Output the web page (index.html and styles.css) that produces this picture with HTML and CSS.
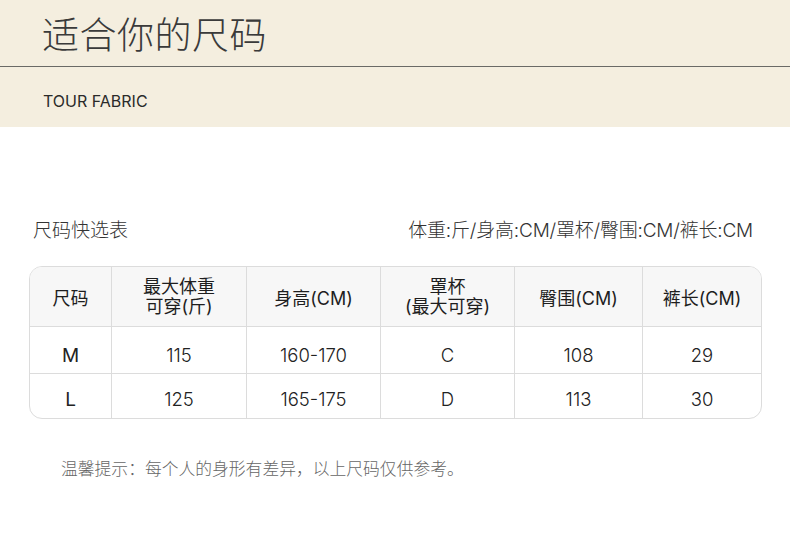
FILE: index.html
```html
<!DOCTYPE html>
<html lang="zh">
<head>
<meta charset="utf-8">
<link rel="stylesheet" href="styles.css">
</head>
<body>
<header class="hero">
  <div class="hero-title"><h1>适合你的尺码</h1></div>
  <div class="hero-sub">TOUR FABRIC</div>
</header>
<main class="content">
  <div class="caption">
    <span class="caption-left">尺码快选表</span>
    <span class="caption-right">体重:斤/身高:CM/罩杯/臀围:CM/裤长:CM</span>
  </div>
  <div class="table">
    <div class="row head">
      <div class="cell c1">尺码</div>
      <div class="cell c2 two">最大体重<br>可穿(斤)</div>
      <div class="cell c3">身高(CM)</div>
      <div class="cell c4 two">罩杯<br>(最大可穿)</div>
      <div class="cell c5">臀围(CM)</div>
      <div class="cell c6">裤长(CM)</div>
    </div>
    <div class="row r1">
      <div class="cell c1 size">M</div>
      <div class="cell c2">115</div>
      <div class="cell c3">160-170</div>
      <div class="cell c4">C</div>
      <div class="cell c5">108</div>
      <div class="cell c6">29</div>
    </div>
    <div class="row r2">
      <div class="cell c1 size">L</div>
      <div class="cell c2">125</div>
      <div class="cell c3">165-175</div>
      <div class="cell c4">D</div>
      <div class="cell c5">113</div>
      <div class="cell c6">30</div>
    </div>
  </div>
  <p class="note">温馨提示：每个人的身形有差异，以上尺码仅供参考。</p>
</main>
</body>
</html>
```
FILE: styles.css
```css
* { box-sizing: border-box; }
html, body { margin: 0; padding: 0; background: #fff; }
body {
  width: 790px;
  font-family: Inter, "Noto Sans CJK SC", "Noto Sans", sans-serif;
  color: #222;
}
.hero {
  background: #f4eedf;
  height: 127px;
}
.hero-title {
  height: 67px;
  border-bottom: 1px solid #6a6a66;
  padding-left: 42px;
  padding-top: 11px;
}
.hero-title h1 {
  margin: 0;
  font-family: "Noto Sans CJK SC", sans-serif;
  font-size: 37px;
  line-height: 44px;
  font-weight: 200;
  color: #3a3a3a;
  letter-spacing: 0.5px;
}
.hero-sub {
  padding-left: 43px;
  padding-top: 23px;
  font-size: 16px;
  line-height: 22px;
  color: #2a2a2a;
  font-weight: 400;
}
.content {
  padding: 0 28px 0 29px;
}
.caption {
  display: flex;
  justify-content: space-between;
  align-items: center;
  height: 28px;
  margin-top: 87px;
  padding: 0 9px 0 4px;
  font-size: 19px;
  color: #333;
}
.caption-left, .caption-right { font-weight: 300; }
.caption-right { letter-spacing: -0.2px; }
.table {
  margin-top: 24px;
  border: 1px solid #dcdcdc;
  border-radius: 13px;
  overflow: hidden;
  width: 733px;
}
.row {
  display: grid;
  grid-template-columns: 81px 135px 134px 134px 128px 1fr;
}
.row + .row { border-top: 1px solid #dcdcdc; }
.head { background: #f7f7f7; height: 59px; }
.r1 { height: 47px; }
.r2 { height: 45px; }
.cell {
  display: flex;
  align-items: center;
  justify-content: center;
  text-align: center;
  font-size: 18.5px;
  color: #222;
  font-weight: 300;
}
.r1 .cell { padding-top: 10px; }
.r2 .cell { padding-top: 6px; }
.cell + .cell { border-left: 1px solid #dcdcdc; }
.head .cell { font-size: 18px; font-weight: 400; color: #1e1e1e; padding-top: 1px; }
.head .two { line-height: 20px; }
.size { font-weight: 400; font-size: 19px; }
.note {
  margin: 37px 0 0 32px;
  font-size: 16.8px;
  color: #666;
  font-weight: 300;
}
```
